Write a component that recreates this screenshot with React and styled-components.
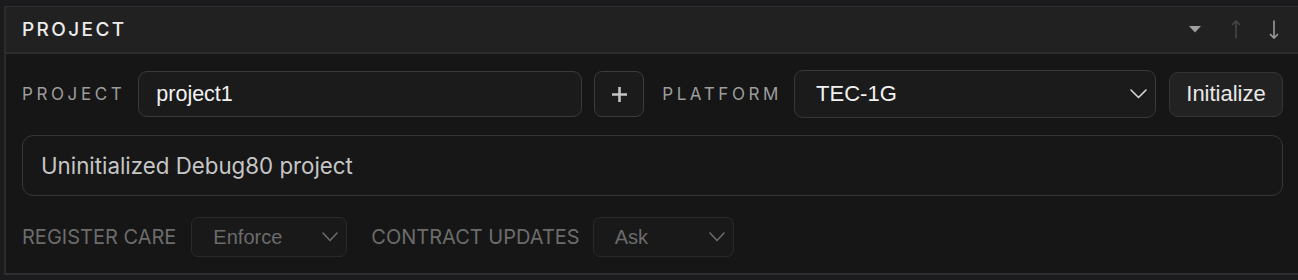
import React from "react";
import styled, { createGlobalStyle } from "styled-components";

const Global = createGlobalStyle`
  html, body { margin: 0; padding: 0; background: #1b1b1d; }
  body { height: 280px; overflow: hidden; }
  * { box-sizing: border-box; }
`;

const Page = styled.div`
  padding: 6px 0 0 4px;
  background: #1b1b1d;
  height: 280px;
`;

const Panel = styled.section`
  border-top: 1px solid #2f2f2f;
  border-left: 2px solid #2c2c2c;
  border-bottom: 2px solid #2e2e2e;
  background: #161616;
`;

const Header = styled.div`
  height: 47px;
  display: flex;
  align-items: center;
  padding: 0 5px 0 16px;
  background: #212121;
  border-bottom: 2px solid #2e2e2e;
`;

const Title = styled.h2`
  margin: 0;
  flex: 1;
  font-family: Inter, "Liberation Sans", sans-serif;
  font-size: 19px;
  font-weight: 500;
  letter-spacing: 2.4px;
  color: #ececec;
`;

const HeaderTools = styled.div`
  display: flex;
  align-items: center;
`;

const ToolButton = styled.button`
  background: none;
  border: none;
  padding: 0;
  width: ${(p) => p.$w}px;
  height: 24px;
  display: flex;
  align-items: center;
  justify-content: center;
  color: ${(p) => (p.$dim ? "#464646" : "#9c9c9c")};
`;

const Body = styled.div`
  padding: 16px 15px 16px 16px;
  display: flex;
  flex-direction: column;
`;

const Row = styled.div`
  display: flex;
  align-items: center;
  height: ${(p) => p.$h}px;
  margin-top: ${(p) => p.$mt || 0}px;
`;

const Label = styled.span`
  font-family: Inter, "Liberation Sans", sans-serif;
  font-size: 17px;
  letter-spacing: 3.6px;
  color: #9d9d9d;
  margin-right: ${(p) => p.$mr}px;
  margin-left: ${(p) => p.$ml || 0}px;
  white-space: nowrap;
`;

const SmallLabel = styled.span`
  font-family: Inter, "Liberation Sans", sans-serif;
  font-size: 20px;
  color: #6c6c6c;
  margin-right: ${(p) => p.$mr}px;
  margin-left: ${(p) => p.$ml || 0}px;
  white-space: nowrap;
`;

const TextInput = styled.div`
  width: ${(p) => p.$w}px;
  height: 46px;
  border: 1.5px solid #3a3a3a;
  border-radius: 9px;
  background: #1b1b1b;
  display: flex;
  align-items: center;
  padding-left: 17px;
  font-family: "Liberation Sans", Arial, sans-serif;
  font-size: 21.5px;
  color: #f2f2f2;
`;

const IconBox = styled.button`
  width: 50px;
  height: 46px;
  margin-left: 12px;
  border: 1.5px solid #3c3c3c;
  border-radius: 8px;
  background: #1b1b1b;
  display: flex;
  align-items: center;
  justify-content: center;
  padding: 0;
`;

const Select = styled.div`
  width: ${(p) => p.$w}px;
  height: ${(p) => (p.$small ? 40 : 48)}px;
  border: ${(p) => (p.$small ? "1px solid #2a2a2a" : "1.5px solid #383838")};
  border-radius: ${(p) => (p.$small ? 7 : 9)}px;
  background: ${(p) => (p.$small ? "#191919" : "#1b1b1b")};
  display: flex;
  align-items: center;
  justify-content: space-between;
  padding: 0 8px 0 21px;
  font-family: "Liberation Sans", Arial, sans-serif;
  font-size: ${(p) => (p.$small ? 20 : 22)}px;
  color: ${(p) => (p.$small ? "#6b6b6b" : "#f2f2f2")};
`;

const Button = styled.button`
  margin-left: 13px;
  width: 114px;
  height: 45px;
  border: 1.5px solid #353535;
  border-radius: 9px;
  background: #222222;
  font-family: "Liberation Sans", Arial, sans-serif;
  font-size: 22px;
  color: #e8e8e8;
  padding: 0;
`;

const Description = styled.div`
  height: 61px;
  width: 100%;
  border: 1.5px solid #363636;
  border-radius: 11px;
  background: #171717;
  display: flex;
  align-items: center;
  padding-left: 18px;
  font-family: Inter, "Liberation Sans", sans-serif;
  font-size: 22.3px;
  color: #c6c6c6;
`;

const Chevron = ({ color, w = 17 }) => (
  <svg width={w} height="10" viewBox={`0 0 ${w} 10`} fill="none">
    <path d={`M1 1 L${w / 2} 8.5 L${w - 1} 1`} stroke={color} strokeWidth="1.6" strokeLinecap="round" strokeLinejoin="round" />
  </svg>
);

export default function App() {
  return (
    <>
      <Global />
      <Page>
        <Panel>
          <Header>
            <Title>PROJECT</Title>
            <HeaderTools>
              <ToolButton $w={44}>
                <svg width="12" height="7" viewBox="0 0 12 7">
                  <path d="M0 0 H12 L6 6.5 Z" fill="#a0a0a0" />
                </svg>
              </ToolButton>
              <ToolButton $w={38} $dim>
                <svg width="10" height="19" viewBox="0 0 10 19" fill="none">
                  <path d="M5 1 V18.5 M1 5 L5 1 L9 5" stroke="currentColor" strokeWidth="1.6" />
                </svg>
              </ToolButton>
              <ToolButton $w={38}>
                <svg width="10" height="19" viewBox="0 0 10 19" fill="none">
                  <path d="M5 0.5 V18 M1 14 L5 18 L9 14" stroke="currentColor" strokeWidth="1.6" />
                </svg>
              </ToolButton>
            </HeaderTools>
          </Header>
          <Body>
            <Row $h={48}>
              <Label $mr={13}>PROJECT</Label>
              <TextInput $w={444}>project1</TextInput>
              <IconBox>
                <svg width="15" height="15" viewBox="0 0 15 15">
                  <path d="M7.5 0 V15 M0 7.5 H15" stroke="#c4c4c4" strokeWidth="2.6" />
                </svg>
              </IconBox>
              <Label $ml={18} $mr={12}>PLATFORM</Label>
              <Select $w={362}>
                <span>TEC-1G</span>
                <Chevron color="#d6d6d6" />
              </Select>
              <Button>Initialize</Button>
            </Row>
            <Row $h={61} $mt={17}>
              <Description>Uninitialized Debug80 project</Description>
            </Row>
            <Row $h={40} $mt={21}>
              <SmallLabel $mr={15}>REGISTER CARE</SmallLabel>
              <Select $small $w={156}>
                <span>Enforce</span>
                <Chevron color="#6a6a6a" w={16} />
              </Select>
              <SmallLabel $ml={24} $mr={13}>CONTRACT UPDATES</SmallLabel>
              <Select $small $w={141}>
                <span>Ask</span>
                <Chevron color="#6a6a6a" w={16} />
              </Select>
            </Row>
          </Body>
        </Panel>
      </Page>
    </>
  );
}
